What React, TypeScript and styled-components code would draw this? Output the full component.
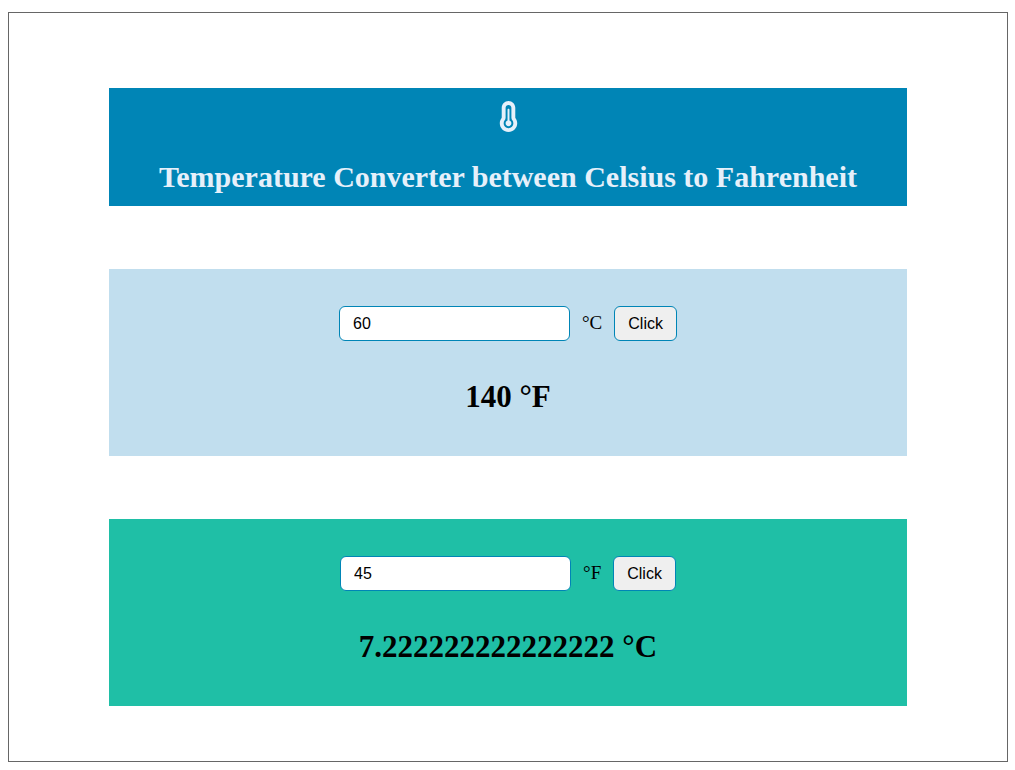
import React, { useState } from "react";
import styled, { createGlobalStyle } from "styled-components";
import { FaTemperatureThreeQuarters } from "react-icons/fa6";

const GlobalStyle = createGlobalStyle`
  *, *::before, *::after {
    box-sizing: border-box;
  }
  body {
    margin: 12px 7px 8px 8px;
    background: #fff;
    color: #000;
    font-family: "Liberation Serif", "Times New Roman", serif;
  }
`;

const Page = styled.main`
  display: flex;
  flex-direction: column;
  gap: 63px;
  padding: 75px 10% 55px;
  border: 1px solid #666;
`;

const Header = styled.header`
  display: flex;
  flex-direction: column;
  align-items: center;
  gap: 26px;
  padding: 13px 0 10px;
  background: #0085b6;
  color: #e6f0fa;
  font-size: 31px;
  text-align: center;
`;

const Title = styled.h1`
  margin: 0;
  font-size: 30px;
  line-height: 38px;
`;

const Panel = styled.form<{ $tone: string }>`
  display: flex;
  flex-direction: column;
  align-items: center;
  gap: 37px;
  padding: 37px 0 41px;
  background: ${(p) => p.$tone};
`;

const Row = styled.div`
  display: flex;
  align-items: baseline;
  gap: 12px;
`;

const Field = styled.input`
  width: 231px;
  height: 35px;
  padding: 0 13px;
  border: 1px solid #0085b6;
  border-radius: 6px;
  background: #fff;
  color: #000;
  font: 16px "Liberation Sans", Arial, sans-serif;
`;

const Unit = styled.label`
  font-size: 19px;
  line-height: 22px;
`;

const Submit = styled.button`
  height: 35px;
  padding: 0 13px;
  border: 1px solid #0085b6;
  border-radius: 6px;
  background: #efefef;
  color: #000;
  font: 16px "Liberation Sans", Arial, sans-serif;
`;

const Result = styled.output`
  font-size: 31px;
  font-weight: bold;
  line-height: 37px;
`;

type ConverterProps = {
  id: string;
  tone: string;
  from: string;
  to: string;
  initial: string;
  convert: (value: number) => number;
};

function Converter({ id, tone, from, to, initial, convert }: ConverterProps) {
  const [value, setValue] = useState(initial);
  const [result, setResult] = useState(convert(Number(initial)));
  return (
    <Panel
      $tone={tone}
      onSubmit={(e) => {
        e.preventDefault();
        setResult(convert(Number(value)));
      }}
    >
      <Row>
        <Field id={id} value={value} onChange={(e) => setValue(e.target.value)} />
        <Unit htmlFor={id}>{from}</Unit>
        <Submit type="submit">Click</Submit>
      </Row>
      <Result htmlFor={id}>
        {result} {to}
      </Result>
    </Panel>
  );
}

export default function App() {
  return (
    <>
      <GlobalStyle />
      <Page>
        <Header>
          <FaTemperatureThreeQuarters aria-hidden="true" />
          <Title>Temperature Converter between Celsius to Fahrenheit</Title>
        </Header>
        <Converter
          id="celsius"
          tone="#c1deee"
          from="°C"
          to="°F"
          initial="60"
          convert={(c) => (c * 9) / 5 + 32}
        />
        <Converter
          id="fahrenheit"
          tone="#1fbfa6"
          from="°F"
          to="°C"
          initial="45"
          convert={(f) => ((f - 32) * 5) / 9}
        />
      </Page>
    </>
  );
}
